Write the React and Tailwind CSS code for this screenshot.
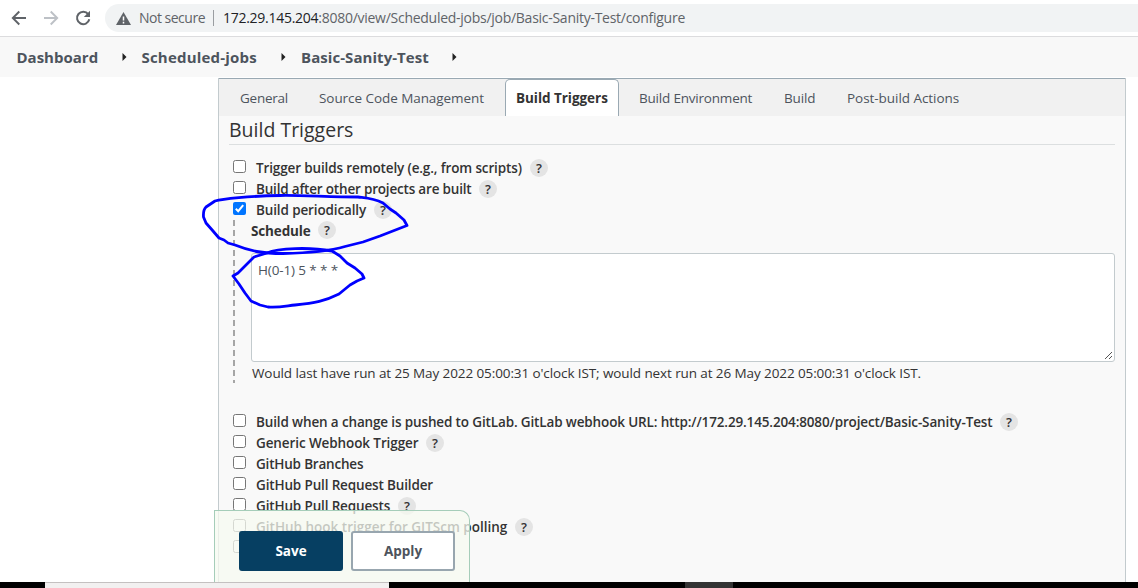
import React from "react";

function Help({ className = "" }) {
  return (
    <span className={`flex h-[18px] w-[18px] shrink-0 items-center justify-center rounded-full bg-[#e4e4e4] text-[13px] leading-none font-semibold text-[#333] ${className}`}>?</span>
  );
}

function Check({ checked }) {
  return checked ? (
    <svg className="h-[13px] w-[13px] shrink-0" viewBox="0 0 13 13">
      <rect width="13" height="13" rx="2" fill="#0075ff" />
      <path d="M2.8 6.8L5.2 9.2L10.2 3.2" fill="none" stroke="#fff" strokeWidth="2" />
    </svg>
  ) : (
    <span className="h-[13px] w-[13px] shrink-0 rounded-[2.5px] border border-[#767676] bg-white" />
  );
}

function Row({ label, width, tracking = "tracking-[-0.13px]", help, checked }) {
  return (
    <div className="flex h-[21px] shrink-0 items-start pl-[14px]">
      <span className="mt-[2px] flex"><Check checked={checked} /></span>
      {label && <span className={`ml-[10px] shrink-0 text-[13.5px] leading-[21px] font-semibold whitespace-nowrap text-[#333] ${width} ${tracking}`}>{label}</span>}
      {help && <Help className="mt-px ml-2" />}
    </div>
  );
}

function Crumb({ label, width }) {
  return (
    <>
      <span className={`shrink-0 whitespace-nowrap ${width}`}>{label}</span>
      <svg className="mr-[15px] ml-[22px] h-2 w-[5px] shrink-0" viewBox="0 0 5 8"><path d="M0.5 0L4.5 4L0.5 8Z" fill="#222" /></svg>
    </>
  );
}

export default function App() {
  return (
    <div className="relative flex h-[588px] w-[1138px] flex-col overflow-hidden bg-white font-['Open_Sans','Noto_Sans',sans-serif]">
      <div className="flex h-[37px] shrink-0 items-center border-b border-[#dcdcde] bg-white">
        <svg className="ml-[11px] h-4 w-4 shrink-0" viewBox="0 0 16 16" fill="none" stroke="#5f6368" strokeWidth="1.9"><path d="M15 8H2M8.3 1.5L1.8 8L8.3 14.5" /></svg>
        <svg className="ml-4 h-4 w-4 shrink-0" viewBox="0 0 16 16" fill="none" stroke="#bdc1c6" strokeWidth="1.9"><path d="M1 8H14M7.7 1.5L14.2 8L7.7 14.5" /></svg>
        <svg className="ml-4 h-4 w-4 shrink-0" viewBox="0 0 16 16"><path d="M13.2 4.2A6.2 6.2 0 1 0 14.3 9.3" fill="none" stroke="#5f6368" strokeWidth="2" /><path d="M15 0.8V7H8.8Z" fill="#5f6368" /></svg>
        <div className="ml-[14px] flex h-7 flex-1 items-center rounded-l-full bg-[#f1f3f4] text-[14px] leading-7 whitespace-nowrap text-[#5f6368]">
          <svg className="ml-[11px] h-[13px] w-[15px] shrink-0" viewBox="0 0 15 13"><path d="M7.5 0L15 13H0Z" fill="#5f6368" /><path d="M7.5 4.5V8.5M7.5 9.8V11.4" stroke="#fff" strokeWidth="1.5" /></svg>
          <span className="ml-[8px] w-[67px] shrink-0 tracking-[-0.5px]">Not secure</span>
          <span className="mr-[9px] ml-[7px] h-4 w-px shrink-0 bg-[#9a9da1]" />
          <span className="tracking-[-0.27px]"><span className="text-[#202124]">172.29.145.204</span>:8080/view/Scheduled-jobs/job/Basic-Sanity-Test/configure</span>
        </div>
      </div>
      <nav className="flex h-10 shrink-0 items-center bg-[#f8f8f8] pl-[16.5px] text-[15px] font-bold text-[#4d545d]">
        <Crumb label="Dashboard" width="w-[83px]" />
        <Crumb label="Scheduled-jobs" width="w-[117.5px] tracking-[0.2px]" />
        <Crumb label="Basic-Sanity-Test" width="w-[129px] tracking-[0.06px]" />
      </nav>
      <div className="h-px shrink-0 bg-white" />
      <main className="ml-[218px] flex w-[908px] flex-1 flex-col border-x border-[#c3cbce] bg-[#f9f9f9]">
        <div className="flex h-[38px] shrink-0 items-stretch border-t border-[#9aa9b3] bg-[#f1f1f1] text-[13.5px] leading-[38px] whitespace-nowrap text-[#4d545d]">
          <span className="ml-[21px] w-[48px] tracking-[-0.25px]">General</span>
          <span className="ml-[31px] w-[165px] tracking-[-0.06px]">Source Code Management</span>
          <span className="ml-[21px] w-[114px] rounded-t-[5px] border border-b-0 border-[#9aa9b3] bg-white pl-[10px] leading-[36px] font-bold tracking-[-0.04px] text-[#333]">Build Triggers</span>
          <span className="ml-[20px] w-[114px] tracking-[-0.2px]">Build Environment</span>
          <span className="ml-[31px] w-[31px] tracking-[-0.15px]">Build</span>
          <span className="ml-[32px] tracking-[-0.05px]">Post-build Actions</span>
        </div>
        <h1 className="mx-[10px] h-[29px] shrink-0 border-b border-[#dcdfe0] text-[19.5px] leading-[27px] font-medium text-[#333]">Build Triggers</h1>
        <div className="h-[13px] shrink-0" />
        <Row label="Trigger builds remotely (e.g., from scripts)" width="w-[266px]" help />
        <Row label="Build after other projects are built" width="w-[215px]" tracking="tracking-[-0.19px]" help />
        <Row label="Build periodically" width="w-[110px]" help checked />
        <div className="ml-[14px] flex h-[163px] shrink-0 items-stretch">
          <svg className="-mt-px h-[163px] w-[3px] shrink-0" viewBox="0 0 3 163"><path d="M1 0V163" stroke="#a6a6a6" strokeWidth="2" strokeDasharray="6 4" /></svg>
          <div className="ml-[15px] flex flex-col">
            <div className="flex h-[21px] shrink-0 items-start text-[13.5px] leading-[21px] font-bold text-[#333]"><span className="w-[60px] tracking-[-0.15px]">Schedule</span><Help className="ml-[7px]" /></div>
            <div className="mt-[11px] flex h-[109px] w-[864px] shrink-0 items-end justify-between rounded-[3px] border border-[#c3cbce] bg-white">
              <span className="ml-[6px] self-start pt-[7px] text-[13.5px] leading-[18px] tracking-[-0.13px] text-[#4d545d]">H(0-1) 5 * * *</span>
              <svg className="h-[10px] w-[10px]" viewBox="0 0 10 10"><path d="M1 8L8 1M5 8L8 5" stroke="#555" /></svg>
            </div>
            <p className="ml-px text-[13.5px] leading-[22px] tracking-[-0.1px] whitespace-nowrap text-[#333]">Would last have run at 25 May 2022 05:00:31 o'clock IST; would next run at 26 May 2022 05:00:31 o'clock IST.</p>
          </div>
        </div>
        <div className="h-[28px] shrink-0" />
        <Row label="Build when a change is pushed to GitLab. GitLab webhook URL: http://172.29.145.204:8080/project/Basic-Sanity-Test" width="w-[736px]" tracking="tracking-[-0.14px]" help />
        <Row label="Generic Webhook Trigger" width="w-[162px]" tracking="tracking-[-0.1px]" help />
        <Row label="GitHub Branches" width="w-[107px]" tracking="tracking-[-0.2px]" />
        <Row label="GitHub Pull Request Builder" width="w-[177px]" tracking="tracking-[-0.15px]" />
        <Row label="GitHub Pull Requests" width="w-[134px]" tracking="tracking-[-0.15px]" help />
        <Row label="GitHub hook trigger for GITScm polling" width="w-[251px]" tracking="tracking-[0px]" help />
        <Row />
      </main>
      <div className="absolute top-[510px] left-[214px] flex h-[72px] w-[256px] gap-2 rounded-tr-[10px] border border-b-0 border-[#a5cdb9] bg-[#f5f9f0]/75 pt-5 pl-6 text-[13.5px] font-bold">
        <button className="h-10 w-[104px] rounded-[3px] bg-[#063f62] text-white">Save</button>
        <button className="h-10 w-[104px] rounded-[3px] border-2 border-[#98a6af] bg-white text-[#4d545d]">Apply</button>
      </div>
      <svg className="pointer-events-none absolute top-[180px] left-[195px] h-[140px] w-[230px]" viewBox="195 180 230 140" fill="none" stroke="#0000ff" strokeWidth="2.8" strokeLinejoin="round" strokeLinecap="round">
        <path d="M358 197C330 197 300 195 280 195.500C250 196 222 199 215 201L206 207Q203 210 203.500 217L206 223L213 231L219 238L224 240L228 243L235 245C250 251 262 253.500 283 253.500C310 253 330 251 345 246.500L363 242L380 236L407 225.500L404 220L396 213L390 209L383 203C373 198 366 198 358 197" />
        <path d="M332 251C310 247 278 248 267 253L254 257L245 266L238 273L233 276L239 284L245 293L251 301L260 305L268 307C278 308 286 306 295 305C315 303 325 301 339 294L350 285L357 281L364 278L362 274L355 268L347 263L340 256Z" />
      </svg>
      <div className="flex h-[6px] shrink-0 bg-black">
        <span className="ml-[45px] w-[344px] border-t border-[#c4c0c0] bg-[#f2f0f0]" />
        <span className="ml-[296px] w-[48px] bg-[#333]" />
      </div>
    </div>
  );
}
